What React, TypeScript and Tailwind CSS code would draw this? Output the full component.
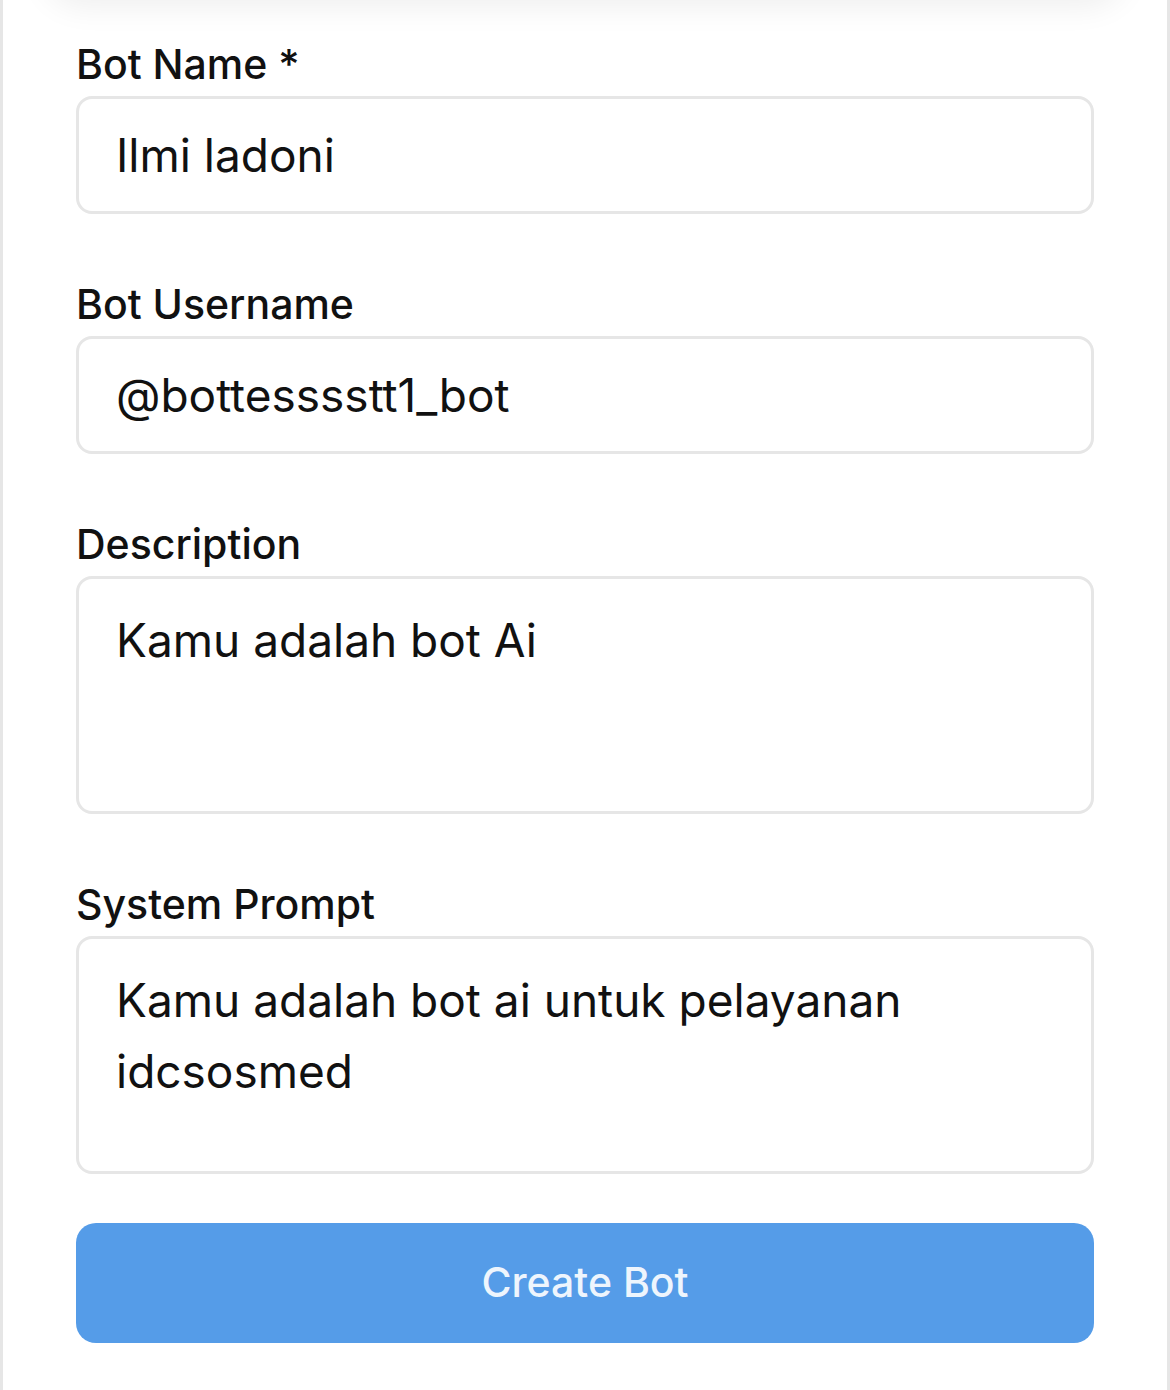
import React from "react";

function Label({ children }: { children: React.ReactNode }) {
  return (
    <label className="block text-[41px] leading-[60px] font-medium text-[#111] mb-[2px]">
      {children}
    </label>
  );
}

export default function App() {
  return (
    <div
      className="min-h-[1390px] w-[1170px] bg-white border-x-[3px] border-[#e6e6e6] overflow-hidden"
      style={{ fontFamily: "Inter, 'Noto Sans', sans-serif" }}
    >
      <div className="mx-[40px] h-[40px] -mt-[40px] rounded-b-[60px] shadow-[0_6px_32px_rgba(0,0,0,0.07)]" />
      <div className="px-[73px] pt-[34px] flex flex-col gap-[60px]">
        <div>
          <Label>Bot Name *</Label>
          <input
            readOnly
            value="Ilmi ladoni"
            className="w-full h-[118px] rounded-[16px] border-[3px] border-[#e6e6e6] px-[37px] text-[46px] text-[#111] outline-none"
          />
        </div>
        <div>
          <Label>Bot Username</Label>
          <input
            readOnly
            value="@bottesssstt1_bot"
            className="w-full h-[118px] rounded-[16px] border-[3px] border-[#e6e6e6] px-[37px] text-[46px] text-[#111] outline-none"
          />
        </div>
        <div>
          <Label>Description</Label>
          <textarea
            readOnly
            value="Kamu adalah bot Ai"
            className="block w-full h-[238px] resize-none rounded-[16px] border-[3px] border-[#e6e6e6] px-[37px] pt-[26px] text-[46px] leading-[71px] text-[#111] outline-none"
          />
        </div>
        <div>
          <Label>System Prompt</Label>
          <textarea
            readOnly
            value="Kamu adalah bot ai untuk pelayanan idcsosmed"
            className="block w-full h-[238px] resize-none rounded-[16px] border-[3px] border-[#e6e6e6] px-[37px] pt-[26px] text-[46px] leading-[71px] text-[#111] outline-none"
          />
        </div>
        <button className="-mt-[11px] w-full h-[120px] rounded-[20px] bg-[#559ce8] text-[41px] font-medium text-[#eef5fd]">
          Create Bot
        </button>
      </div>
    </div>
  );
}
